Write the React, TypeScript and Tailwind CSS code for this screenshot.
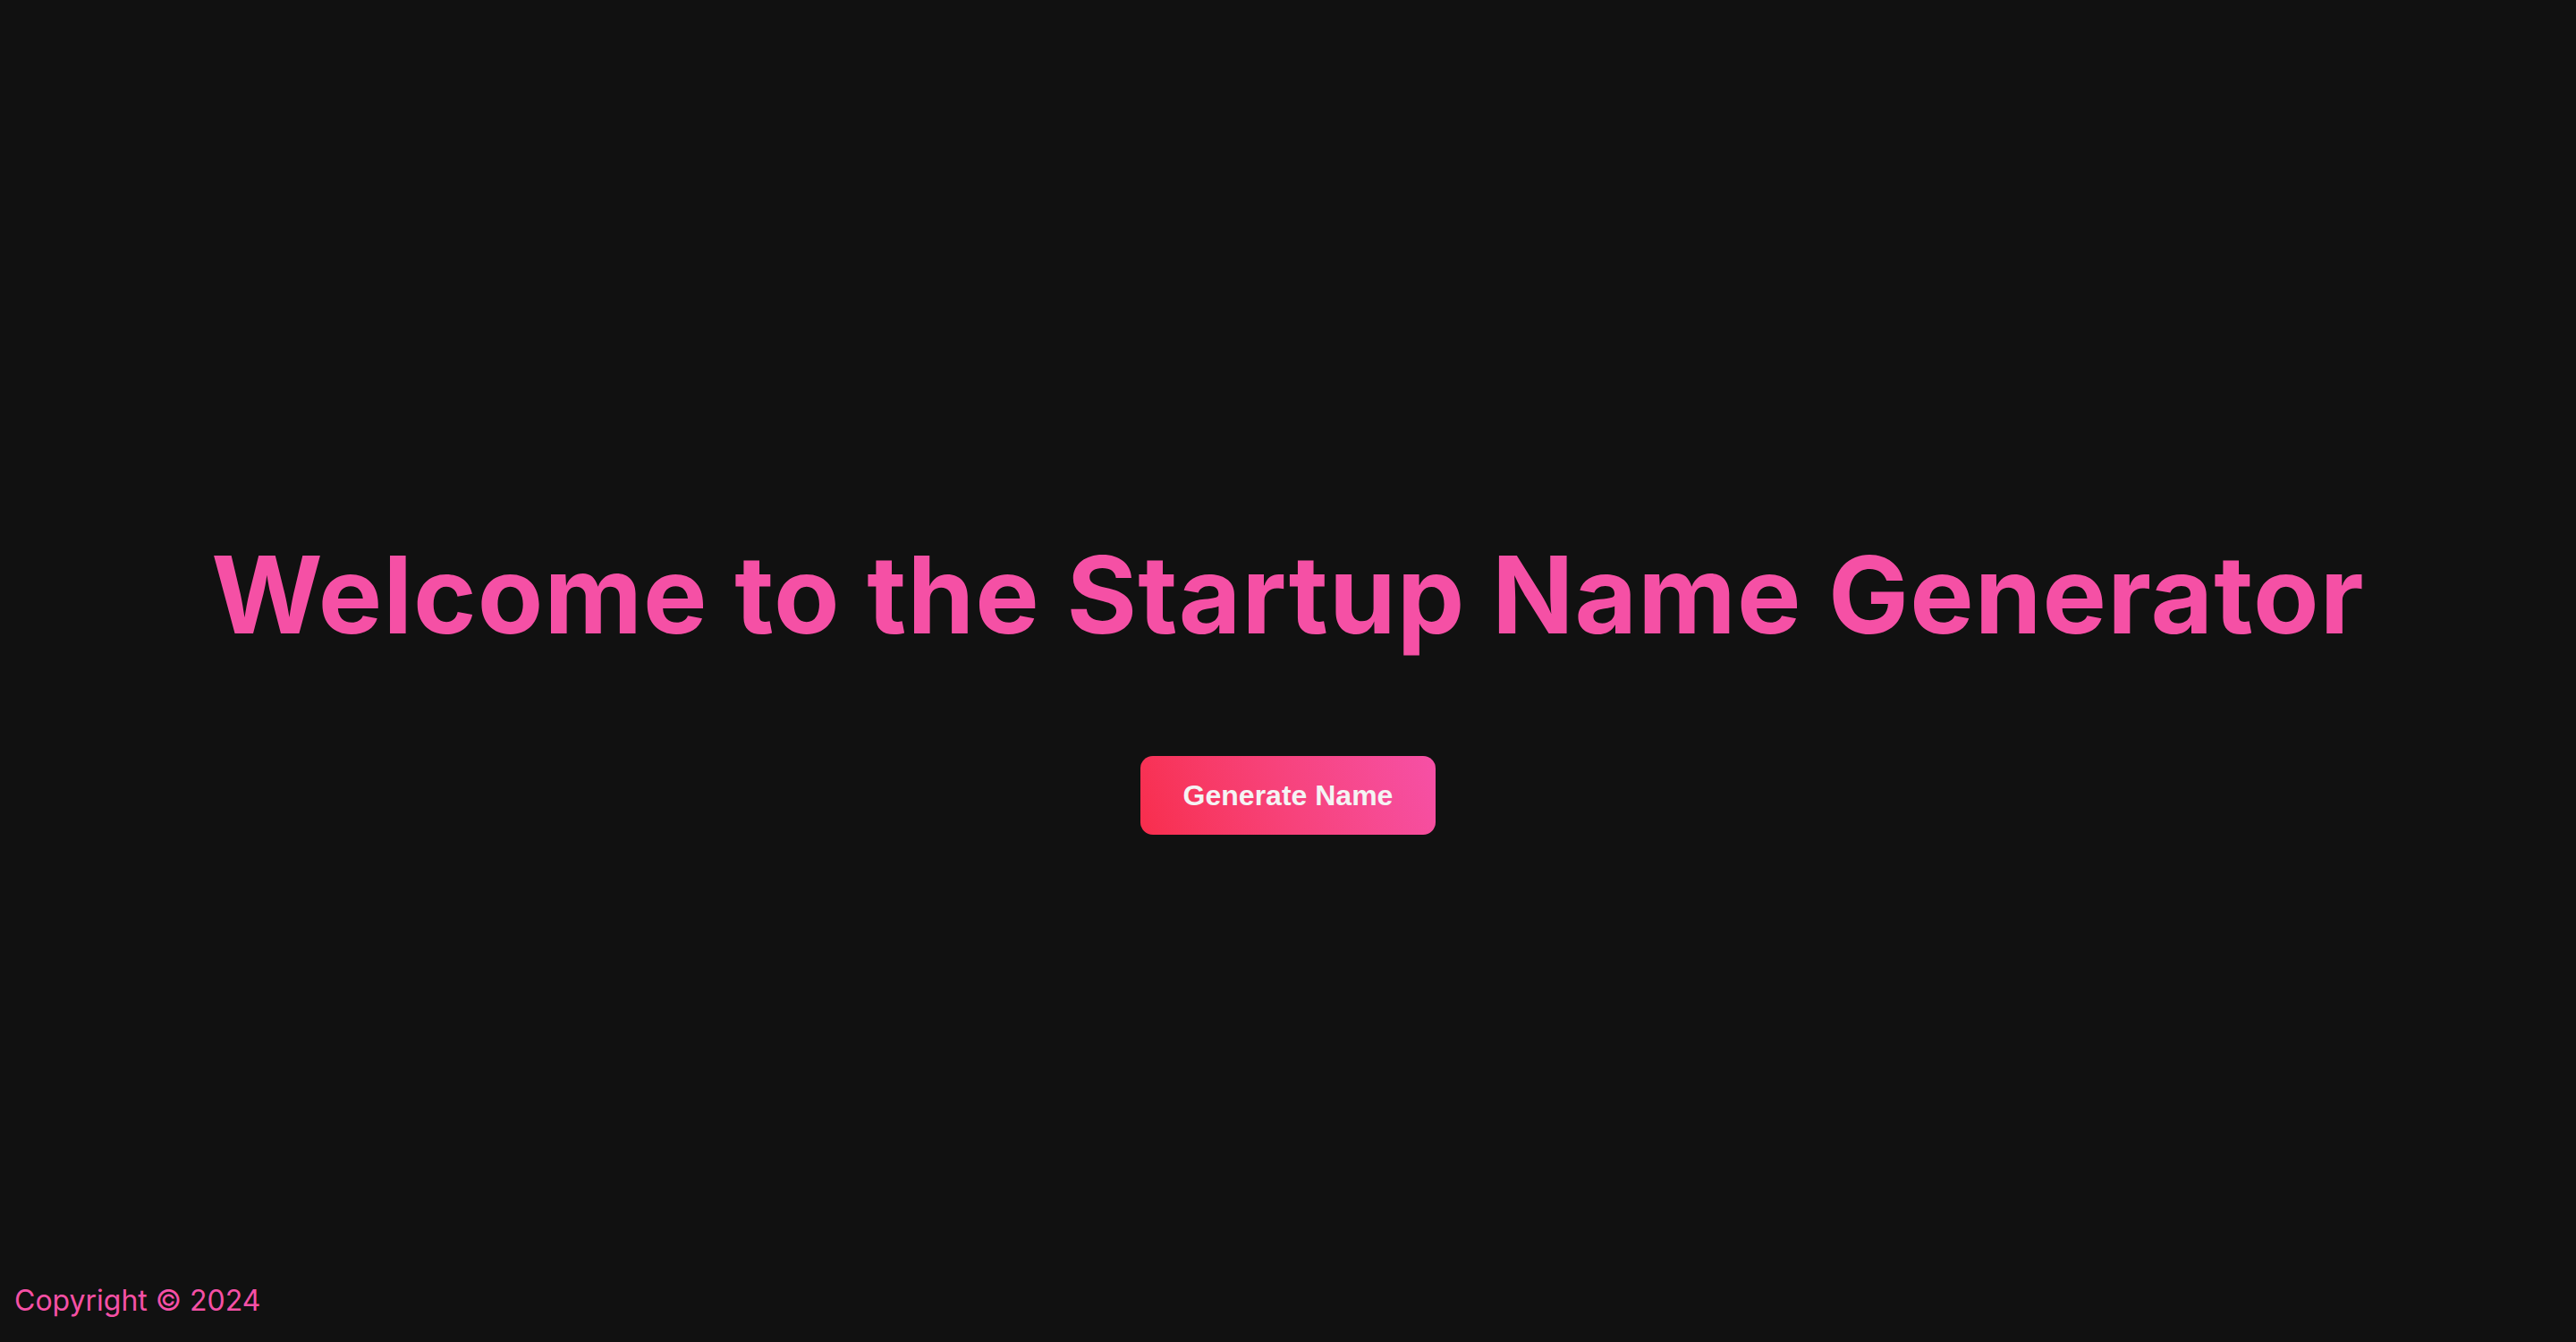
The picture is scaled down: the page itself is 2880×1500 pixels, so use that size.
import React from 'react';

const App: React.FC = () => {
  return (
    <div className="h-screen w-full flex flex-col bg-[#111111] font-['Inter',sans-serif]">
      {/* main hero */}
      <main className="flex-1 flex flex-col items-center justify-center pt-[100px]">
        <h1 className="text-[120px] leading-none font-bold tracking-[1.1px] text-[#f550a5]">
          Welcome to the Startup Name Generator
        </h1>
        <button className="mt-[120px] w-[330px] h-[88px] rounded-[14px] bg-linear-70 from-[#f82d4c] to-[#f650a6] text-[32px] font-bold text-[#f4f4f4] font-['Liberation_Sans',Arial,sans-serif]">
          Generate Name
        </button>
      </main>

      {/* footer */}
      <footer className="px-4 pb-[30px] text-[32px] leading-none text-[#f550a5]">
        Copyright © 2024
      </footer>
    </div>
  );
};

export default App;
